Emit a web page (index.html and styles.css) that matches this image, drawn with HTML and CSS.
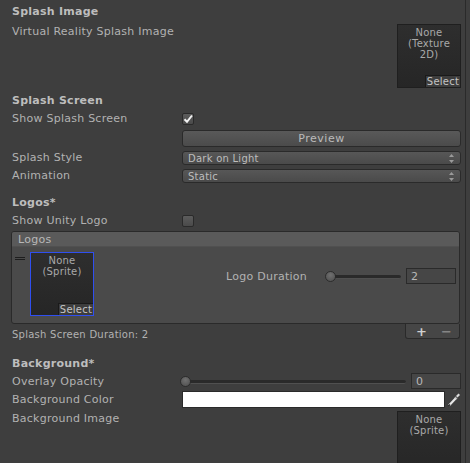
FILE: index.html
```html
<!DOCTYPE html>
<html>
<head>
<meta charset="utf-8">
<link rel="stylesheet" href="styles.css">
</head>
<body>
<div class="panel">
  <div class="hdr first">Splash Image</div>
  <div class="row vr">
    <div class="lbl">Virtual Reality Splash Image</div>
    <div class="objbox">
      <div class="objtext">None<br>(Texture<br>2D)</div>
      <div class="select">Select</div>
    </div>
  </div>

  <div class="hdr">Splash Screen</div>
  <div class="row">
    <div class="lbl">Show Splash Screen</div>
    <div class="check"><svg width="12" height="12" viewBox="0 0 12 12"><path d="M2.5 6.2 L5 8.8 L10 2.5" fill="none" stroke="#f2f2f2" stroke-width="2"/></svg></div>
  </div>
  <div class="row btnrow">
    <div class="lbl"></div>
    <div class="button">Preview</div>
  </div>
  <div class="row">
    <div class="lbl">Splash Style</div>
    <div class="dropdown"><span>Dark on Light</span><svg class="arrows" width="5" height="9" viewBox="0 0 5 9"><path d="M2.5 0 L5 3 L0 3Z M0 6 L5 6 L2.5 9Z" fill="#9a9a9a"/></svg></div>
  </div>
  <div class="row">
    <div class="lbl">Animation</div>
    <div class="dropdown"><span>Static</span><svg class="arrows" width="5" height="9" viewBox="0 0 5 9"><path d="M2.5 0 L5 3 L0 3Z M0 6 L5 6 L2.5 9Z" fill="#9a9a9a"/></svg></div>
  </div>

  <div class="hdr gap">Logos*</div>
  <div class="row">
    <div class="lbl">Show Unity Logo</div>
    <div class="check"></div>
  </div>

  <div class="list">
    <div class="list-head">Logos</div>
    <div class="list-body">
      <div class="handle"></div>
      <div class="objbox blue">
        <div class="objtext">None<br>(Sprite)</div>
        <div class="select">Select</div>
      </div>
      <div class="logo-dur">
        <span class="dur-lbl">Logo Duration</span>
        <div class="slider short"><div class="knob"></div></div>
        <div class="field">2</div>
      </div>
    </div>
  </div>
  <div class="footrow">
    <div class="small">Splash Screen Duration: 2</div>
    <div class="footer"><span class="plus">+</span><span class="minus">−</span></div>
  </div>

  <div class="hdr bggap">Background*</div>
  <div class="row">
    <div class="lbl">Overlay Opacity</div>
    <div class="ctrl sliderrow">
      <div class="slider long"><div class="knob"></div></div>
      <div class="field f2">0</div>
    </div>
  </div>
  <div class="row">
    <div class="lbl">Background Color</div>
    <div class="ctrl colorrow">
      <div class="colorfield"></div>
      <svg class="dropper" width="14" height="15" viewBox="0 0 14 15"><path d="M2 13.5 L9 6" stroke="#e8e8e8" stroke-width="2.2" fill="none"/><path d="M1.5 14 L3 12.5" stroke="#222" stroke-width="1.4"/><path d="M9 4 L11.5 1.5 L13 3 L10.5 5.5 Z" fill="#dcdcdc"/><path d="M8 5 L10 7" stroke="#bbb" stroke-width="1.2"/></svg>
    </div>
  </div>
  <div class="row bgimg">
    <div class="lbl">Background Image</div>
    <div class="objbox">
      <div class="objtext">None<br>(Sprite)</div>
    </div>
  </div>
</div>
</body>
</html>
```
FILE: styles.css
```css
html, body {
  margin: 0;
  padding: 0;
}
body {
  background: #3e3e3e;
  font-family: "DejaVu Sans", sans-serif;
  font-size: 11px;
  letter-spacing: 0.25px;
  color: #b2b2b2;
  width: 470px;
  height: 463px;
  overflow: hidden;
}
.panel {
  width: 466px;
  height: 463px;
  box-sizing: border-box;
  border-right: 1px solid #2a2a2a;
  padding: 0 4px 0 12px;
  overflow: hidden;
}
.hdr {
  height: 18px;
  box-sizing: border-box;
  padding-top: 2px;
  line-height: 16px;
  font-weight: bold;
  color: #bdbdbd;
}
.hdr.first { height: 20px; padding-top: 3px; line-height: 17px; }
.hdr.gap { margin-top: 9px; }
.hdr.bggap { margin-top: 13px; }
.row {
  display: flex;
  height: 18px;
}
.lbl {
  width: 170px;
  flex: none;
  white-space: nowrap;
  box-sizing: border-box;
  padding-top: 2px;
  line-height: 16px;
}
.ctrl { flex: 1; min-width: 0; }
.row.vr { height: 71px; }
.row.vr .lbl { padding-top: 4px; }
.row.vr .objbox { margin-left: auto; margin-top: 4px; }

.objbox {
  position: relative;
  width: 64px;
  height: 64px;
  box-sizing: border-box;
  border: 1px solid #1f1f1f;
  background: linear-gradient(#2e2e2e, #262626);
  flex: none;
}
.objtext {
  font-size: 10px;
  line-height: 11px;
  letter-spacing: 0.2px;
  text-align: center;
  color: #a9a9a9;
  padding-top: 2px;
}
.select {
  position: absolute;
  right: 0;
  bottom: 0;
  width: 34px;
  height: 11px;
  line-height: 11px;
  font-size: 10px;
  text-align: center;
  color: #c4c4c4;
  background: #3d3d3d;
  border-top: 1px solid #1a1a1a;
  border-left: 1px solid #1a1a1a;
}
.check {
  width: 12px;
  height: 12px;
  margin-top: 4px;
  box-sizing: border-box;
  border: 1px solid #2a2a2a;
  border-radius: 2px;
  background: linear-gradient(#5c5c5c, #4a4a4a);
  display: flex;
  align-items: center;
  justify-content: center;
}
.check svg { flex: none; }
.row.btnrow { height: 21px; }
.button {
  flex: 1;
  margin-top: 3px;
  height: 17px;
  line-height: 16px;
  box-sizing: border-box;
  border: 1px solid #2a2a2a;
  border-radius: 3px;
  background: linear-gradient(#595959, #4b4b4b);
  text-align: center;
  color: #bbbbbb;
  letter-spacing: 0.5px;
}
.dropdown {
  flex: 1;
  margin-top: 3px;
  height: 14px;
  line-height: 12px;
  box-sizing: border-box;
  border: 1px solid #2a2a2a;
  border-radius: 3px;
  background: linear-gradient(#575757, #4a4a4a);
  font-size: 10px;
  color: #bdbdbd;
  padding: 1px 6px 0 5px;
  display: flex;
  align-items: center;
  justify-content: space-between;
}
.arrows { flex: none; }

.list {
  margin: 2px 1px 0 -1px;
  height: 93px;
  box-sizing: border-box;
  border: 1px solid #2a2a2a;
  border-radius: 3px;
  overflow: hidden;
  background: #4a4a4a;
}
.list-head {
  height: 15px;
  box-sizing: border-box;
  padding-top: 1px;
  line-height: 14px;
  background: #5a5a5a;
  border-bottom: 1px solid #505050;
  padding-left: 6px;
  color: #b8b8b8;
}
.list-body {
  display: flex;
  padding: 5px 3px 0 3px;
}
.handle {
  width: 10px;
  height: 3px;
  margin-top: 5px;
  margin-right: 5px;
  border-top: 1px solid #1e1e1e;
  border-bottom: 1px solid #1e1e1e;
  box-sizing: border-box;
  flex: none;
}
.objbox.blue { border-color: #2f4ff0; }
.logo-dur {
  margin-left: auto;
  margin-top: 16px;
  height: 16px;
  display: flex;
  align-items: center;
}
.dur-lbl { white-space: nowrap; padding-top: 1px; }
.slider {
  position: relative;
  height: 11px;
  flex: none;
}
.slider::before {
  content: "";
  position: absolute;
  left: 3px;
  right: 0;
  top: 4px;
  height: 3px;
  background: #2a2a2a;
  border-bottom: 1px solid #505050;
  border-radius: 2px;
}
.slider.short { width: 76px; margin-left: 18px; }
.knob {
  position: absolute;
  left: 0;
  top: 0;
  width: 11px;
  height: 11px;
  box-sizing: border-box;
  border-radius: 50%;
  border: 1px solid #2c2c2c;
  background: radial-gradient(circle at 50% 35%, #707070, #4e4e4e);
}
.field {
  width: 50px;
  height: 16px;
  line-height: 15px;
  box-sizing: border-box;
  border: 1px solid #2a2a2a;
  background: #464646;
  padding-left: 4px;
  color: #b8b8b8;
  margin-left: 5px;
  flex: none;
}
.footrow {
  display: flex;
  height: 17px;
}
.small {
  font-size: 10px;
  line-height: 12px;
  margin-top: 5px;
  white-space: nowrap;
}
.footer {
  margin-left: auto;
  margin-right: 1px;
  width: 55px;
  height: 15px;
  box-sizing: border-box;
  border: 1px solid #2a2a2a;
  border-top: none;
  border-radius: 0 0 3px 3px;
  background: #464646;
  display: flex;
  align-items: flex-end;
  justify-content: space-around;
  padding-left: 3px;
  font-weight: bold;
  line-height: 13px;
}
.plus { color: #d0d0d0; font-size: 13px; }
.minus { color: #858585; font-size: 13px; }

.sliderrow {
  display: flex;
  align-items: center;
}
.slider.long { flex: 1; margin-left: -2px; }
.field.f2 { margin-left: 5px; height: 16px; }
.colorrow {
  display: flex;
  align-items: center;
}
.colorfield {
  flex: 1;
  height: 17px;
  box-sizing: border-box;
  border: 1px solid #2a2a2a;
  background: #ffffff;
}
.dropper { flex: none; margin-left: 2px; }
.row.bgimg { height: 60px; }
.row.bgimg .lbl { padding-top: 3px; }
.row.bgimg .objbox { margin-left: auto; margin-top: 3px; }
```
